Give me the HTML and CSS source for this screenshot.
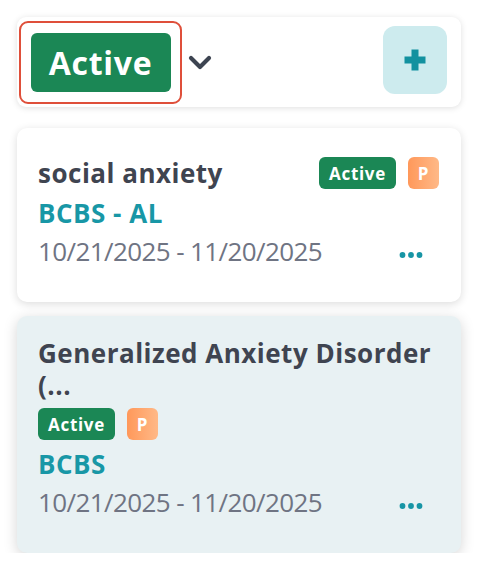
FILE: index.html
```html
<!DOCTYPE html>
<html>
<head>
<meta charset="utf-8">
<link rel="stylesheet" href="styles.css">
</head>
<body>
<div class="page">
  <div class="toolbar">
    <div class="focus-ring">
      <button class="filter-btn">Active</button>
    </div>
    <svg class="chevron" width="24" height="16" viewBox="0 0 24 16"><path d="M3 3 L12 12 L21 3" fill="none" stroke="#3d4451" stroke-width="4.2" stroke-linecap="round" stroke-linejoin="round"/></svg>
    <div class="spacer"></div>
    <button class="add-btn" aria-label="Add">
      <svg width="24" height="24" viewBox="0 0 24 24"><path d="M12 1.5 V22.5 M1.5 12 H22.5" stroke="#13919f" stroke-width="7"/></svg>
    </button>
  </div>

  <div class="card">
    <div class="card-head">
      <div class="title">social anxiety</div>
      <div class="badges">
        <span class="badge badge-active">Active</span>
        <span class="badge badge-p">P</span>
      </div>
    </div>
    <div class="payer">BCBS - AL</div>
    <div class="date-row">
      <span class="dates">10/21/2025 - 11/20/2025</span>
      <svg class="dots" width="24" height="8" viewBox="0 0 24 8"><circle cx="3.5" cy="4" r="2.9" fill="#1795a5"/><circle cx="12" cy="4" r="2.9" fill="#1795a5"/><circle cx="20.5" cy="4" r="2.9" fill="#1795a5"/></svg>
    </div>
  </div>

  <div class="card card-selected">
    <div class="title">Generalized Anxiety Disorder (...</div>
    <div class="badges badges-below">
      <span class="badge badge-active">Active</span>
      <span class="badge badge-p">P</span>
    </div>
    <div class="payer">BCBS</div>
    <div class="date-row">
      <span class="dates">10/21/2025 - 11/20/2025</span>
      <svg class="dots" width="24" height="8" viewBox="0 0 24 8"><circle cx="3.5" cy="4" r="2.9" fill="#1795a5"/><circle cx="12" cy="4" r="2.9" fill="#1795a5"/><circle cx="20.5" cy="4" r="2.9" fill="#1795a5"/></svg>
    </div>
  </div>
</div>
</body>
</html>
```

FILE: styles.css
```css
* { box-sizing: border-box; }
html, body {
  margin: 0;
  padding: 0;
  background: #ffffff;
  font-family: "Open Sans", "Noto Sans", sans-serif;
}
.page {
  padding: 17px 19px 0 17px;
  display: flex;
  flex-direction: column;
}
.toolbar {
  height: 90px;
  background: #fff;
  border-radius: 9px;
  box-shadow: 0 1px 6px rgba(0,0,0,0.13);
  display: flex;
  align-items: center;
  padding: 0 14px 0 2px;
}
.focus-ring {
  border: 2.5px solid #df4f3a;
  border-radius: 9px;
  padding: 10.5px 9.5px 9.5px 9.5px;
  display: flex;
  margin-top: 4px;
  margin-bottom: 4px;
}
.filter-btn {
  width: 140px;
  height: 59px;
  border: none;
  border-radius: 6px;
  background: #1b8755;
  color: #fff;
  font-family: inherit;
  font-weight: 700;
  font-size: 32px;
  letter-spacing: 0.7px;
  line-height: 59px;
  padding: 0;
}
.chevron {
  margin-left: 6px;
  margin-top: 2px;
}
.spacer { flex: 1; }
.add-btn {
  width: 64px;
  height: 68px;
  border: none;
  border-radius: 12px;
  background: #cdebee;
  display: flex;
  align-items: center;
  justify-content: center;
  padding: 0;
  margin-top: -4px;
}
.card {
  margin-top: 21px;
  background: #fff;
  border-radius: 10px;
  box-shadow: 0 2px 9px rgba(0,0,0,0.14);
  padding: 21px 22px 35px 21px;
}
.card + .card { margin-top: 14px; }
.card-selected {
  background: #e8f1f3;
  box-shadow: 0 3px 14px rgba(0,0,0,0.17);
}
.card-head {
  display: flex;
  justify-content: space-between;
  align-items: center;
  margin-top: 8px;
}
.title {
  color: #3f4450;
  font-weight: 700;
  font-size: 26px;
  letter-spacing: 0.5px;
  line-height: 32px;
}
.badges {
  display: flex;
  gap: 12px;
}
.badges-below { margin-top: 7px; }
.badge {
  height: 32px;
  border-radius: 6px;
  color: #fff;
  font-weight: 700;
  font-size: 17px;
  letter-spacing: 0.7px;
  display: flex;
  align-items: center;
  justify-content: center;
}
.badge-active {
  width: 77px;
  background: #1b8755;
}
.badge-p {
  width: 31px;
  background: linear-gradient(90deg, #ff985a, #ffb987);
}
.payer {
  margin-top: 8px;
  color: #1897a6;
  font-weight: 700;
  font-size: 26px;
  letter-spacing: 0.5px;
  line-height: 32px;
}
.date-row {
  margin-top: 6px;
  display: flex;
  align-items: center;
  justify-content: space-between;
  padding-right: 16px;
}
.dates {
  color: #6f7483;
  font-size: 26px;
  letter-spacing: -0.6px;
  line-height: 32px;
}
.dots { margin-top: 8px; }
```
